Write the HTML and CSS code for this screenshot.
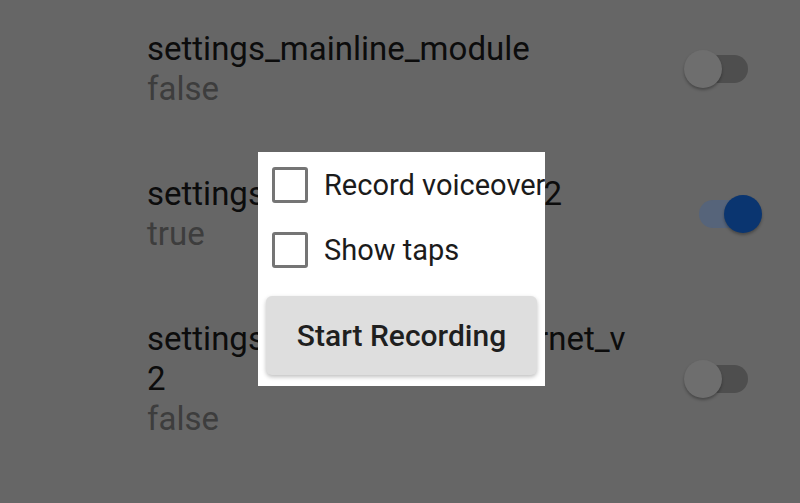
FILE: index.html
```html
<!DOCTYPE html>
<html lang="en">
<head>
    <meta charset="UTF-8">
    <meta name="viewport" content="width=device-width, initial-scale=1.0">
    <title>Feature flags</title>
    <link rel="stylesheet" href="styles.css">
</head>
<body>
    <div class="flag-list">
        <div class="flag">
            <div class="flag-text">
                <div class="flag-name">settings_mainline_module</div>
                <div class="flag-value">false</div>
            </div>
            <div class="switch"><span class="track"></span><span class="thumb"></span></div>
        </div>
        <div class="flag">
            <div class="flag-text">
                <div class="flag-name">settings_mobile_network_v2</div>
                <div class="flag-value">true</div>
            </div>
            <div class="switch on"><span class="track"></span><span class="thumb"></span></div>
        </div>
        <div class="flag">
            <div class="flag-text">
                <div class="flag-name">settings_network_and_internet_v2</div>
                <div class="flag-value">false</div>
            </div>
            <div class="switch"><span class="track"></span><span class="thumb"></span></div>
        </div>
    </div>

    <!-- screen record dialog over the dimmed list -->
    <div class="dialog">
        <label class="option">
            <span class="box"></span>
            <span class="option-label">Record voiceover</span>
        </label>
        <label class="option">
            <span class="box"></span>
            <span class="option-label">Show taps</span>
        </label>
        <button type="button" class="start">Start Recording</button>
    </div>
</body>
</html>
```

FILE: styles.css
```css
body {
    margin: 0;
    height: 503px;
    overflow: hidden;
    background-color: #666666;
    font-family: Roboto, "Liberation Sans", sans-serif;
    position: relative;
}

.flag-list {
    padding: 29px 36px 0 147px;
    display: flex;
    flex-direction: column;
    gap: 65px;
}

.flag {
    display: flex;
    align-items: center;
    justify-content: space-between;
}

.flag-text {
    width: 496px;
    font-size: 33px;
    line-height: 40px;
    word-break: break-all;
}

.flag-name {
    color: #0c0c0c;
}

.flag-value {
    color: #3d3d3d;
}

.switch {
    position: relative;
    width: 81px;
    height: 40px;
    flex-shrink: 0;
}

.track {
    position: absolute;
    left: 16px;
    top: 6px;
    width: 49px;
    height: 28px;
    border-radius: 14px;
    background-color: #4e4e4e;
}

.thumb {
    position: absolute;
    left: 1px;
    top: 1px;
    width: 38px;
    height: 38px;
    border-radius: 50%;
    background-color: #6e6e6e;
    box-shadow: 0 2px 3px rgba(0, 0, 0, 0.3);
}

.switch.on .track {
    background-color: #56647a;
}

.switch.on .thumb {
    left: 41px;
    background-color: #0a3570;
}

.dialog {
    position: absolute;
    left: 258px;
    top: 152px;
    width: 287px;
    height: 234px;
    box-sizing: border-box;
    padding: 8px 8px 11px 8px;
    background-color: #fff;
    overflow: hidden;
    display: flex;
    flex-direction: column;
}

.option {
    display: flex;
    align-items: center;
    height: 50px;
    padding-left: 6px;
    margin-bottom: 15px;
    white-space: nowrap;
}

.box {
    width: 36px;
    height: 36px;
    box-sizing: border-box;
    border: 3px solid #757575;
    border-radius: 3px;
    flex-shrink: 0;
    margin-right: 16px;
}

.option-label {
    font-size: 29px;
    color: #1b1b1b;
}

.start {
    margin-top: 6px;
    height: 79px;
    border: none;
    border-radius: 6px;
    background-color: #dedede;
    box-shadow: 0 2px 4px rgba(0, 0, 0, 0.25);
    font-family: Roboto, "Liberation Sans", sans-serif;
    font-size: 30px;
    font-weight: 500;
    color: #1f1f1f;
}
```
